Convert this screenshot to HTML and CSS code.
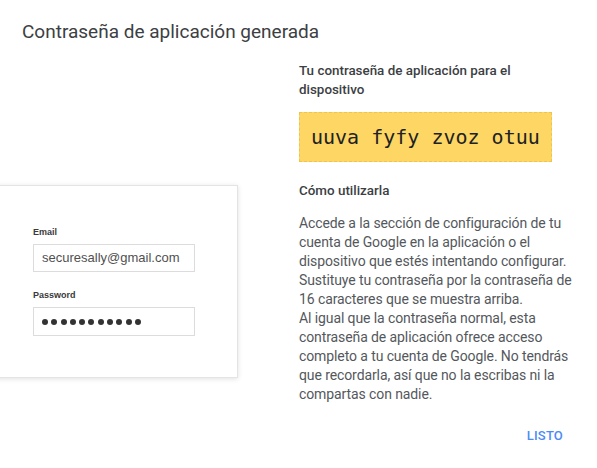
FILE: index.html
```html
<!DOCTYPE html>
<html lang="es">
<head>
<meta charset="utf-8">
<title>Contraseña de aplicación generada</title>
<link rel="stylesheet" href="styles.css">
</head>
<body>
<div class="dialog">
  <h1 class="dialog-title">Contraseña de aplicación generada</h1>
  <div class="dialog-body">
    <div class="preview">
      <div class="login-card">
        <div class="field">
          <div class="field-label">Email</div>
          <div class="field-input">securesally@gmail.com</div>
        </div>
        <div class="field">
          <div class="field-label">Password</div>
          <div class="field-input dots">
            <span></span><span></span><span></span><span></span><span></span><span></span><span></span><span></span><span></span><span></span><span></span>
          </div>
        </div>
      </div>
    </div>
    <div class="info">
      <p class="info-heading">Tu contraseña de aplicación para el dispositivo</p>
      <div class="app-password">uuva fyfy zvoz otuu</div>
      <p class="info-heading how">Cómo utilizarla</p>
      <p class="info-text">Accede a la sección de configuración de tu cuenta de Google en la aplicación o el dispositivo que estés intentando configurar. Sustituye tu contraseña por la contraseña de 16 caracteres que se muestra arriba.<br>Al igual que la contraseña normal, esta contraseña de aplicación ofrece acceso completo a tu cuenta de Google. No tendrás que recordarla, así que no la escribas ni la compartas con nadie.</p>
    </div>
  </div>
  <div class="dialog-actions">
    <button class="btn-done" type="button">LISTO</button>
  </div>
</div>
</body>
</html>
```

FILE: styles.css
```css
html, body {
  margin: 0;
  padding: 0;
  background: #ffffff;
}

body {
  font-family: Roboto, "Noto Sans", Arial, sans-serif;
  overflow: hidden;
}

.dialog {
  width: 597px;
  height: 468px;
  box-sizing: border-box;
  padding-top: 20px;
  display: flex;
  flex-direction: column;
}

.dialog-title {
  margin: 0 0 0 22px;
  font-size: 19px;
  line-height: 24px;
  font-weight: 400;
  color: #3c4043;
}

.dialog-body {
  display: flex;
  margin-top: 17px;
}

.preview {
  width: 299px;
  flex: none;
}

/* miniature sign-in form shown beside the instructions */
.login-card {
  margin-top: 124px;
  margin-left: -12px;
  width: 250px;
  box-sizing: border-box;
  padding: 41px 0 41px 44px;
  background: #fff;
  border: 1px solid #e4e4e4;
  box-shadow: 0 1px 5px rgba(0, 0, 0, 0.12);
  display: flex;
  flex-direction: column;
  gap: 18px;
}

.field-label {
  font-family: "Liberation Sans", Arial, sans-serif;
  font-size: 9px;
  line-height: 11px;
  font-weight: 700;
  color: #3a3a3a;
  margin-bottom: 6px;
}

.field-input {
  width: 162px;
  height: 28px;
  box-sizing: border-box;
  border: 1px solid #dcdcdc;
  padding: 0 8px;
  font-family: "Liberation Sans", Arial, sans-serif;
  font-size: 13px;
  line-height: 26px;
  color: #505050;
}

.field-input.dots {
  height: 29px;
  display: flex;
  align-items: center;
  gap: 3.3px;
}

.dots span {
  width: 6px;
  height: 6px;
  border-radius: 50%;
  background: #333;
}

.info {
  width: 280px;
  color: #4a4e52;
}

.info p {
  margin: 0;
}

.info-heading {
  font-size: 13.4px;
  line-height: 19px;
  font-weight: 500;
  color: #3c4043;
}

.app-password {
  display: inline-block;
  margin-top: 13px;
  padding: 12px 11px;
  background: #fdd663;
  border: 1px dashed #eec350;
  font-family: "DejaVu Sans Mono", "Liberation Mono", monospace;
  font-size: 20px;
  line-height: 24px;
  color: #202124;
}

.info-heading.how {
  margin-top: 19px;
}

.info-text {
  margin-top: 14px !important;
  font-size: 14px;
  line-height: 19px;
  letter-spacing: -0.1px;
  color: #54585c;
}

.dialog-actions {
  margin-top: auto;
  display: flex;
  justify-content: flex-end;
  padding: 0 26px 16px 0;
}

.btn-done {
  border: none;
  background: none;
  padding: 6px 8px;
  font-family: Roboto, Arial, sans-serif;
  font-size: 13px;
  line-height: 20px;
  font-weight: 500;
  letter-spacing: 0.2px;
  color: #4c8bf5;
  cursor: pointer;
}
```
